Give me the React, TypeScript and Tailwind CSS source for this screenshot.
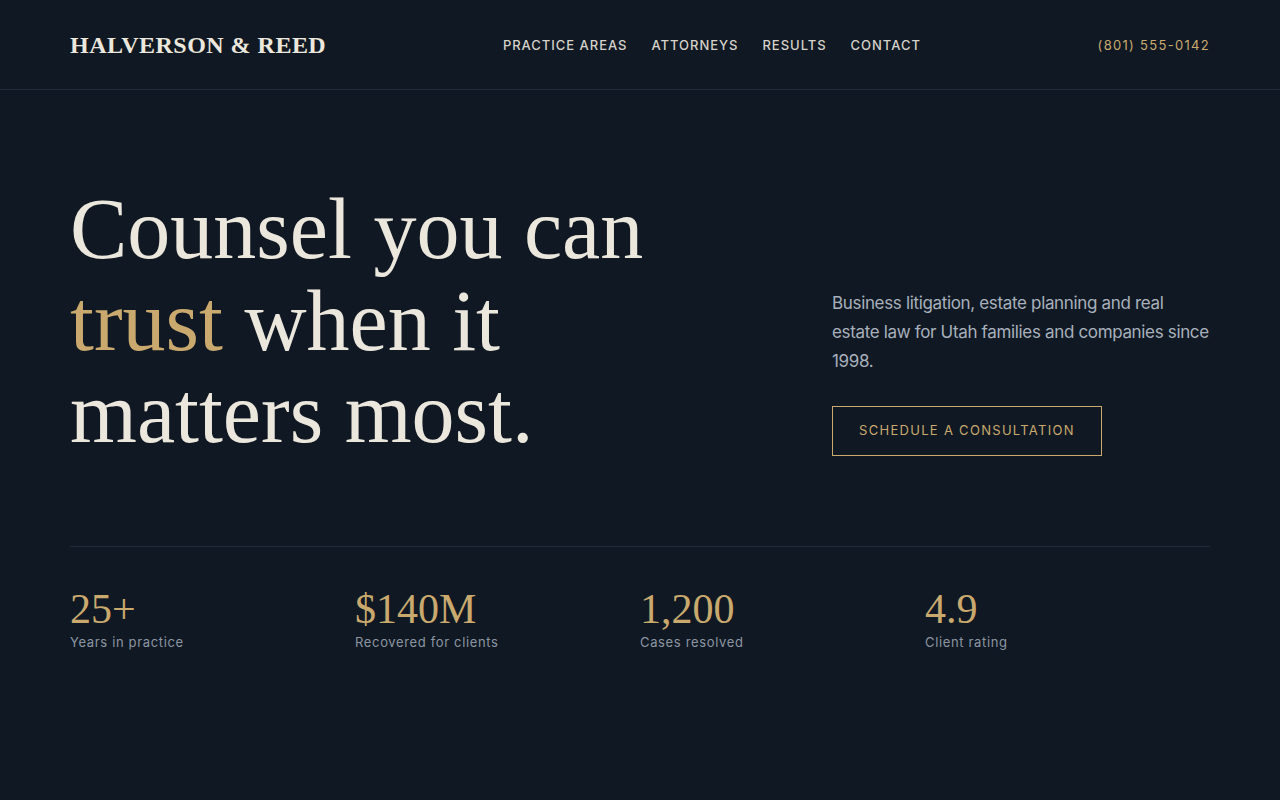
import React from "react";

const serif = { fontFamily: '"Liberation Serif", "DejaVu Serif", serif' };

export default function App() {
  const stats = [
    { n: "25+", l: "Years in practice" },
    { n: "$140M", l: "Recovered for clients" },
    { n: "1,200", l: "Cases resolved" },
    { n: "4.9", l: "Client rating" },
  ];
  return (
    <div className="min-h-[800px] w-full bg-[#101923] font-['Inter',sans-serif] text-[#ece7dd]">
      <header className="border-b border-[#222c38]">
        <div className="mx-auto flex h-[89px] max-w-[1140px] items-center justify-between">
          <div
            className="text-[24px] font-bold tracking-[0.02em] text-[#ece7dd]"
            style={serif}
          >
            HALVERSON &amp; REED
          </div>
          <nav className="flex items-center gap-[24px] pt-[2px] text-[13px] font-medium tracking-[0.075em] text-[#d6d2ca]">
            <a>PRACTICE AREAS</a>
            <a>ATTORNEYS</a>
            <a>RESULTS</a>
            <a>CONTACT</a>
          </nav>
          <div className="pt-[2px] text-[13px] tracking-[0.1em] text-[#c9a96e]">
            (801) 555-0142
          </div>
        </div>
      </header>

      <main className="mx-auto max-w-[1140px]">
        <section className="flex items-end justify-between pt-[93px]">
          <h1
            className="text-[86px] font-normal leading-[92px] text-[#ece7dd]"
            style={serif}
          >
            Counsel you can
            <br />
            <span className="text-[#c9a96e]">trust</span> when it
            <br />
            matters most.
          </h1>
          <div className="mb-[3px] w-[378px]">
            <p className="text-[17px] leading-[29px] tracking-[-0.02em] text-[#a8b0bc]">
              Business litigation, estate planning and real estate law for Utah
              families and companies since 1998.
            </p>
            <button className="mt-[30px] flex h-[50px] items-center border border-[#c9a96e] px-[26px] text-[13px] tracking-[0.1em] text-[#c9a96e]">
              SCHEDULE A CONSULTATION
            </button>
          </div>
        </section>

        <section className="mt-[87px] grid grid-cols-4 border-t border-[#222c38] pt-[38px]">
          {stats.map((s) => (
            <div key={s.l}>
              <div
                className="text-[42px] leading-[48px] text-[#c9a96e]"
                style={serif}
              >
                {s.n}
              </div>
              <div className="text-[13px] tracking-[0.05em] text-[#8c95a2]">
                {s.l}
              </div>
            </div>
          ))}
        </section>
      </main>
    </div>
  );
}
